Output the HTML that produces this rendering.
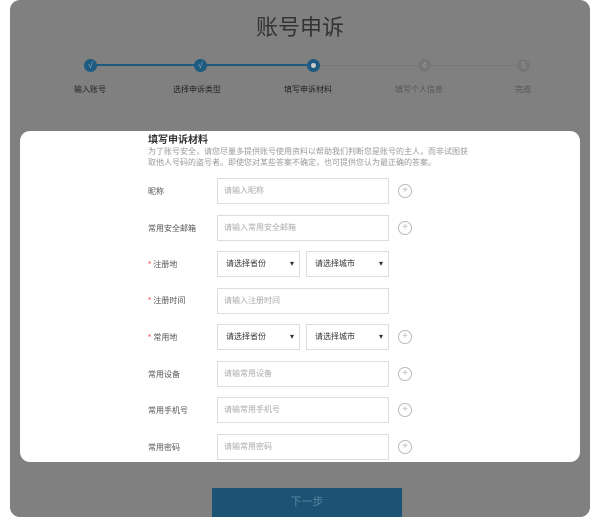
<!DOCTYPE html>
<html><head><meta charset="utf-8"><style>
*{margin:0;padding:0;box-sizing:border-box}
body{width:600px;height:519px;background:#fff;position:relative;overflow:hidden;font-family:"Liberation Sans","Noto Sans CJK SC",sans-serif}
.outer{position:absolute;left:10px;top:0;width:580px;height:517px;background:#808080;border-radius:10px}
.title{position:absolute;left:0;width:600px;top:10px;text-align:center;font-size:22px;color:#333}
.line{position:absolute;top:64px;height:2px}
.dot{position:absolute;width:13px;height:13px;border-radius:50%;top:59px;font-size:8px;text-align:center;line-height:13px}
.done{background:#1d5b80;color:#aac}
.cur{background:#1d5b80}
.cur::after{content:"";position:absolute;left:4px;top:4px;width:5px;height:5px;border-radius:50%;background:#ccc}
.todo{background:#777;color:#999}
.lbl{position:absolute;top:84px;font-size:8px;color:#222;transform:translateX(-50%);white-space:nowrap}
.modal{position:absolute;left:20px;top:131px;width:560px;height:331px;background:#fff;border-radius:10px}
.h{position:absolute;left:148px;top:131px;font-size:10px;font-weight:bold;color:#333}
.desc{position:absolute;left:148px;top:146px;width:320px;font-size:8px;line-height:11px;color:#999}
.fl{position:absolute;left:148px;font-size:8px;color:#555}
.fl b{color:#e44;font-weight:normal}
.in{position:absolute;left:217px;width:172px;height:26px;border:1px solid #ddd;font-size:8px;color:#aaa;padding-left:6px;line-height:24px}
.sel{position:absolute;width:83px;height:26px;border:1px solid #ddd;font-size:8px;color:#333;padding-left:8px;line-height:24px}
.sel::after{content:"▾";position:absolute;right:5px;top:0;font-size:8px}
.plus{position:absolute;left:398px;width:14px;height:14px;border:1px solid #bbb;border-radius:50%;color:#bbb;font-size:10px;text-align:center;line-height:12px}
.btn{position:absolute;left:212px;top:488px;width:190px;height:29px;background:#1c5273;color:#5a86a2;font-size:11px;text-align:center;line-height:29px}
</style></head><body>
<div class="outer"></div>
<div class="title">账号申诉</div>
<div class="line" style="left:90px;width:223px;background:#1d5b80"></div>
<div class="line" style="left:313px;width:210px;background:#787878;height:1px;top:65px"></div>
<div class="dot done" style="left:84px">√</div>
<div class="dot done" style="left:194px">√</div>
<div class="dot cur" style="left:307px"></div>
<div class="dot todo" style="left:418px">4</div>
<div class="dot todo" style="left:517px">5</div>
<div class="lbl" style="left:90px">输入账号</div>
<div class="lbl" style="left:197px">选择申诉类型</div>
<div class="lbl" style="left:308px">填写申诉材料</div>
<div class="lbl" style="left:419px;color:#555">填写个人信息</div>
<div class="lbl" style="left:523px;color:#555">完成</div>
<div class="modal"></div>
<div class="h">填写申诉材料</div>
<div class="desc">为了账号安全，请您尽量多提供账号使用资料以帮助我们判断您是账号的主人，而非试图获取他人号码的盗号者。即使您对某些答案不确定，也可提供您认为最正确的答案。</div>

<div class="fl" style="top:186px">昵称</div><div class="in" style="top:178px">请输入昵称</div><div class="plus" style="top:184px">+</div>
<div class="fl" style="top:223px">常用安全邮箱</div><div class="in" style="top:215px">请输入常用安全邮箱</div><div class="plus" style="top:221px">+</div>
<div class="fl" style="top:259px"><b>* </b>注册地</div><div class="sel" style="left:217px;top:251px">请选择省份</div><div class="sel" style="left:306px;top:251px">请选择城市</div>
<div class="fl" style="top:295px"><b>* </b>注册时间</div><div class="in" style="top:288px">请输入注册时间</div>
<div class="fl" style="top:332px"><b>* </b>常用地</div><div class="sel" style="left:217px;top:324px">请选择省份</div><div class="sel" style="left:306px;top:324px">请选择城市</div><div class="plus" style="top:330px">+</div>
<div class="fl" style="top:369px">常用设备</div><div class="in" style="top:361px">请输常用设备</div><div class="plus" style="top:367px">+</div>
<div class="fl" style="top:405px">常用手机号</div><div class="in" style="top:397px">请输常用手机号</div><div class="plus" style="top:403px">+</div>
<div class="fl" style="top:442px">常用密码</div><div class="in" style="top:434px">请输常用密码</div><div class="plus" style="top:440px">+</div>
<div class="btn">下一步</div>
</body></html>
